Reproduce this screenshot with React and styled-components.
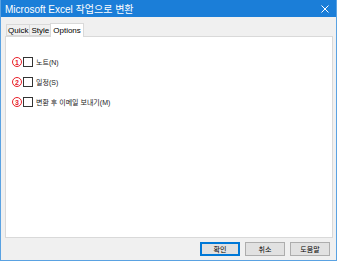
import React, { useState } from 'react'
import styled, { createGlobalStyle } from 'styled-components'

const accent = '#1b7ed8'
const uiFont = '"Liberation Sans", "Noto Sans CJK KR", sans-serif'

const GlobalStyle = createGlobalStyle`
  html, body {
    margin: 0;
    background: #ffffff;
  }
  * {
    box-sizing: border-box;
  }
`

const Window = styled.div`
  width: 337px;
  height: 261px;
  display: flex;
  flex-direction: column;
  background: #f0f0f0;
  border: 1px solid #5aa2e2;
  border-top: none;
  font-family: ${uiFont};
`

const TitleBar = styled.div`
  height: 17px;
  display: flex;
  align-items: center;
  justify-content: space-between;
  background: ${accent};
  color: #ffffff;
  padding: 0 7px 0 4px;
  font-size: 10px;
`

const CloseIcon = () => (
  <svg width="8" height="8" viewBox="0 0 8 8">
    <path d="M0.5 0.5 L7.5 7.5 M7.5 0.5 L0.5 7.5" stroke="#ffffff" strokeWidth="1" />
  </svg>
)

const Content = styled.div`
  flex: 1;
  display: flex;
  flex-direction: column;
  padding: 5px 3px 0 4px;
`

const TabList = styled.div`
  display: flex;
  align-items: flex-end;
  height: 14px;
  padding-left: 1px;
`

const Tab = styled.div`
  height: ${p => (p.active ? '14px' : '12px')};
  margin-bottom: ${p => (p.active ? '-1px' : '0')};
  padding: 0 ${p => (p.active ? '2px' : '1px')};
  display: flex;
  align-items: center;
  font-size: 8px;
  color: #000;
  background: ${p => (p.active ? '#ffffff' : '#f0f0f0')};
  border: 1px solid #d9d9d9;
  border-bottom: ${p => (p.active ? 'none' : '1px solid #d9d9d9')};
  margin-left: ${p => (p.first ? '0' : '-1px')};
  position: relative;
  z-index: ${p => (p.active ? 1 : 0)};
`

const Panel = styled.div`
  height: 202px;
  background: #ffffff;
  border: 1px solid #d9d9d9;
  display: flex;
  flex-direction: column;
  gap: 10px;
  padding: 20px 0 0 6px;
`

const OptionRow = styled.label`
  display: flex;
  align-items: center;
  height: 10px;
  font-size: 7px;
  color: #222;
`

const Marker = styled.span`
  width: 10px;
  height: 10px;
  border-radius: 50%;
  border: 1px solid #e8202a;
  color: #e8202a;
  font-size: 7px;
  font-weight: bold;
  display: flex;
  align-items: center;
  justify-content: center;
  margin-right: 1px;
  line-height: 1;
`

const Box = styled.span`
  width: 10px;
  height: 10px;
  border: 1px solid #333;
  background: #fff;
  margin-right: 3px;
`

const Footer = styled.div`
  flex: 1;
  display: flex;
  justify-content: flex-end;
  align-items: center;
  gap: 5px;
  padding-right: 3px;
`

const Button = styled.button`
  width: 40px;
  height: 14px;
  padding: 0;
  font-family: ${uiFont};
  font-size: 7px;
  color: #000;
  background: #e1e1e1;
  border: 1px solid ${p => (p.primary ? '#0078d7' : '#adadad')};
  box-shadow: ${p => (p.primary ? 'inset 0 0 0 1px #0078d7' : 'none')};
`

const tabs = ['Quick', 'Style', 'Options']

const options = [
  { n: '1', label: '노트(N)' },
  { n: '2', label: '일정(S)' },
  { n: '3', label: '변환 후 이메일 보내기(M)' },
]

export default function App() {
  const [active, setActive] = useState('Options')
  return (
    <>
      <GlobalStyle />
      <Window>
        <TitleBar>
          <span>Microsoft Excel 작업으로 변환</span>
          <CloseIcon />
        </TitleBar>
        <Content>
          <TabList>
            {tabs.map((t, i) => (
              <Tab key={t} first={i === 0} active={t === active} onClick={() => setActive(t)}>
                {t}
              </Tab>
            ))}
          </TabList>
          <Panel>
            {options.map(o => (
              <OptionRow key={o.n}>
                <Marker>{o.n}</Marker>
                <Box />
                {o.label}
              </OptionRow>
            ))}
          </Panel>
          <Footer>
            <Button primary>확인</Button>
            <Button>취소</Button>
            <Button>도움말</Button>
          </Footer>
        </Content>
      </Window>
    </>
  )
}
